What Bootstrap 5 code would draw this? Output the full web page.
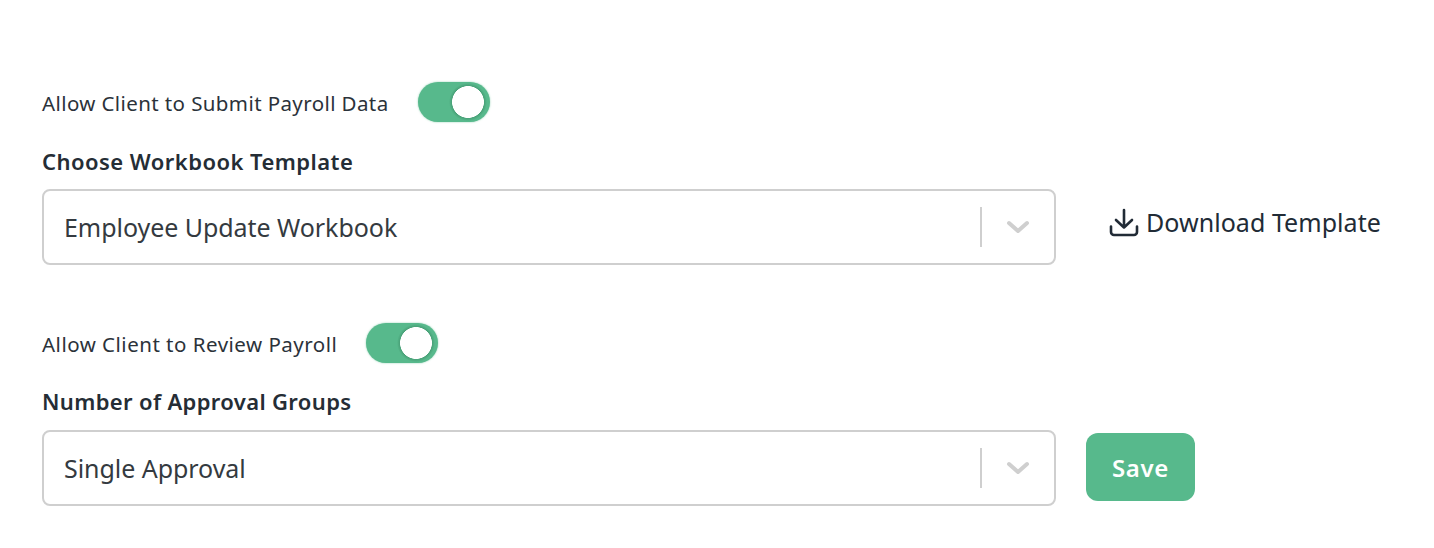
<!DOCTYPE html>
<html lang="en">
<head>
<meta charset="utf-8">
<title>Payroll settings</title>
<link rel="stylesheet" href="https://cdn.jsdelivr.net/npm/bootstrap@5.3.0/dist/css/bootstrap.min.css">
<style>
html,body{background:#fff;}
body{font-family:"Noto Sans","Liberation Sans",sans-serif;color:#212b36;overflow:hidden;}
.pagewrap{padding:82px 0 0 42px;}
.toggle-row{height:40px;}
.toggle-text{font-size:20.5px;letter-spacing:.4px;margin-right:29px;padding-top:3px;color:#2b323a;white-space:nowrap;}
.form-switch.switchbox{padding:0;margin:0;min-height:0;}
.form-switch .form-check-input.switchinput{width:72px;height:40px;margin:0;float:none;display:block;border:0;border-radius:20px;background-color:#57b98c;background-image:radial-gradient(circle at 50px 20px,#fff 15.6px,rgba(30,90,60,.25) 16.2px,transparent 19px);background-position:0 0;background-size:72px 40px;box-shadow:0 0 2px rgba(87,185,140,.7);}
.field-title{font-size:22px;font-weight:600;letter-spacing:.45px;color:#252d35;margin:24px 0 13px;line-height:30px;}
.pickbox{width:1014px;height:76px;border:2px solid #cfcfcf;border-radius:8px;padding:0 24px 0 20px;font-size:25px;letter-spacing:-.05px;color:#343a40;}
.pickdiv{width:2px;height:40px;background:#cfcfcf;margin-right:24px;}
.pickname{padding-top:1px;}
.dl-action{margin-left:53px;margin-top:-8px;font-size:25px;letter-spacing:.05px;color:#212b36;text-decoration:none;gap:6px;white-space:nowrap;}
.btn.save-action{margin-left:30px;margin-top:-2px;width:109px;height:68px;background:#57b98c;border:0;border-radius:12px;color:#fff;font-size:24px;font-weight:600;letter-spacing:.7px;padding:2px 0 0;}
.group-two{margin-top:58px;}
.group-two .toggle-text{letter-spacing:.5px;}
.group-two .field-title{margin:23px 0 14px;letter-spacing:.35px;}
</style>
</head>
<body>
<div class="pagewrap">
  <div class="toggle-row d-flex align-items-center">
    <span class="toggle-text">Allow Client to Submit Payroll Data</span>
    <div class="form-check form-switch switchbox"><input class="form-check-input switchinput" type="checkbox" role="switch" checked aria-label="Allow Client to Submit Payroll Data"></div>
  </div>
  <p class="field-title">Choose Workbook Template</p>
  <div class="d-flex align-items-center">
    <div class="pickbox d-flex align-items-center justify-content-between">
      <span class="pickname">Employee Update Workbook</span>
      <span class="d-flex align-items-center"><span class="pickdiv"></span>
      <svg width="24" height="16" viewBox="0 0 24 16" fill="none" stroke="#cfcfcf" stroke-width="4" stroke-linecap="round" stroke-linejoin="round"><path d="M3 4l9 8 9-8"/></svg></span>
    </div>
    <a class="dl-action d-inline-flex align-items-center" href="#">
      <svg width="31" height="30" viewBox="0 0 31 30" fill="none" stroke="#212b36" stroke-width="2.6" stroke-linecap="round" stroke-linejoin="round"><path d="M15 2v17M7 12l8 7.5 8-7.5"/><path d="M2 18.5v5.5a3 3 0 0 0 3 3h20a3 3 0 0 0 3-3v-5.5"/></svg>
      Download Template
    </a>
  </div>
  <div class="group-two">
    <div class="toggle-row d-flex align-items-center">
      <span class="toggle-text">Allow Client to Review Payroll</span>
      <div class="form-check form-switch switchbox"><input class="form-check-input switchinput" type="checkbox" role="switch" checked aria-label="Allow Client to Review Payroll"></div>
    </div>
    <p class="field-title">Number of Approval Groups</p>
    <div class="d-flex align-items-center">
      <div class="pickbox d-flex align-items-center justify-content-between">
        <span class="pickname">Single Approval</span>
        <span class="d-flex align-items-center"><span class="pickdiv"></span>
        <svg width="24" height="16" viewBox="0 0 24 16" fill="none" stroke="#cfcfcf" stroke-width="4" stroke-linecap="round" stroke-linejoin="round"><path d="M3 4l9 8 9-8"/></svg></span>
      </div>
      <button type="button" class="btn save-action">Save</button>
    </div>
  </div>
</div>
<script src="https://cdn.jsdelivr.net/npm/bootstrap@5.3.0/dist/js/bootstrap.bundle.min.js"></script>
</body>
</html>
